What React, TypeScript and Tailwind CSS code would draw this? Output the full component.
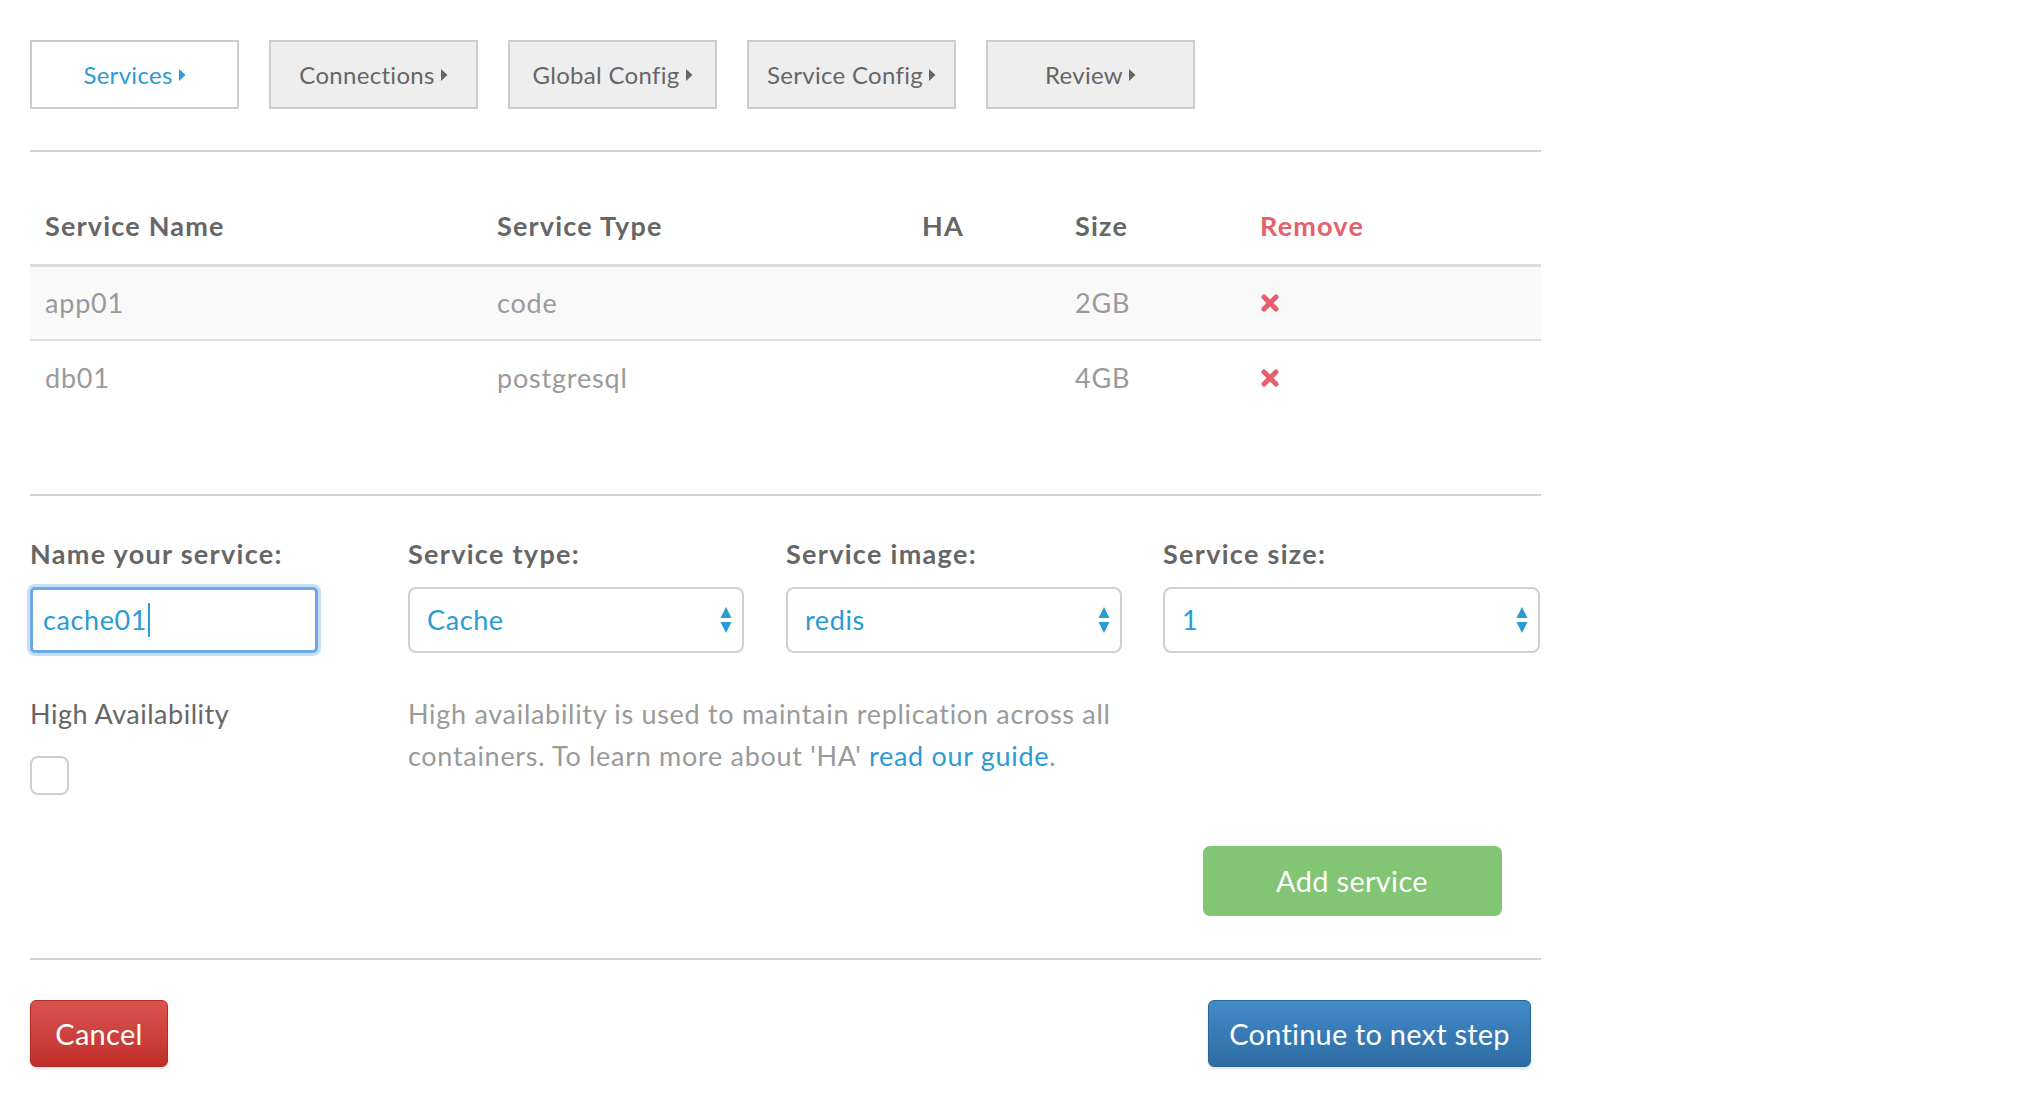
const steps = ["Services", "Connections", "Global Config", "Service Config", "Review"];

const services = [
  { name: "app01", type: "code", ha: "", size: "2GB" },
  { name: "db01", type: "postgresql", ha: "", size: "4GB" },
];

function Caret() {
  return (
    <svg width="8" height="14" viewBox="0 0 8 14" className="ml-[5px] inline-block">
      <path d="M1 1 L7.5 7 L1 13 Z" fill="currentColor" />
    </svg>
  );
}

function RemoveIcon() {
  return (
    <svg width="20" height="20" viewBox="0 0 20 20" className="text-[#e4606d]">
      <path d="M4 4 L16 16 M16 4 L4 16" stroke="currentColor" strokeWidth="5" strokeLinecap="round" />
    </svg>
  );
}

function SelectArrows() {
  return (
    <svg width="12" height="28" viewBox="0 0 12 28" className="text-[#2b9bd3]">
      <path d="M6 1 L11.5 12 L0.5 12 Z" fill="currentColor" />
      <path d="M0.5 16 L11.5 16 L6 27 Z" fill="currentColor" />
    </svg>
  );
}

function FakeSelect({ value, width }: { value: string; width: string }) {
  return (
    <div
      className={`${width} h-[66px] flex items-center justify-between rounded-[8px] border-2 border-[#cfcfcf] bg-white pl-[17px] pr-[10px] text-[27px] tracking-[0.6px] text-[#2b9bd3]`}
    >
      <span>{value}</span>
      <SelectArrows />
    </div>
  );
}

const cols = "grid grid-cols-[452px_425px_153px_185px_1fr] items-center";

export default function App() {
  return (
    <div className="min-h-screen bg-white font-['Lato','Open_Sans',sans-serif]">
      <div className="ml-[30px] w-[1511px] pt-[40px]">
        {/* Steps */}
        <div className="flex gap-[30px]">
          {steps.map((s, i) => (
            <div
              key={s}
              className={`w-[209px] h-[69px] flex items-center justify-center border-2 border-[#cccccc] text-[24px] tracking-[0.3px] ${
                i === 0 ? "bg-white text-[#2b9bd3]" : "bg-[#eeeeee] text-[#666666]"
              }`}
            >
              {s}
              <Caret />
            </div>
          ))}
        </div>

        <div className="mt-[41px] h-[2px] bg-[#d2d2d2]" />

        {/* Table */}
        <div className="mt-[37px]">
          <div className={`${cols} h-[78px] border-b-[3px] border-[#dddddd] text-[27px] tracking-[1.2px] font-bold text-[#666666]`}>
            <div className="px-[15px]">Service Name</div>
            <div className="px-[15px]">Service Type</div>
            <div className="px-[15px]">HA</div>
            <div className="px-[15px]">Size</div>
            <div className="px-[15px] text-[#e4606d]">Remove</div>
          </div>
          {services.map((r, i) => (
            <div
              key={r.name}
              className={`${cols} h-[74px] text-[27px] tracking-[0.8px] text-[#9a9a9a] ${
                i === 0 ? "bg-[#f9f9f9] border-b-2 border-[#dddddd]" : ""
              }`}
            >
              <div className="px-[15px]">{r.name}</div>
              <div className="px-[15px]">{r.type}</div>
              <div className="px-[15px]">{r.ha}</div>
              <div className="px-[15px]">{r.size}</div>
              <div className="px-[15px] flex">
                <RemoveIcon />
              </div>
            </div>
          ))}
        </div>

        <div className="mt-[79px] h-[2px] bg-[#d2d2d2]" />

        {/* Form */}
        <div className="mt-[40px] grid grid-cols-[378px_378px_377px_1fr]">
          <div>
            <div className="h-[36px] flex items-center text-[27px] tracking-[1.3px] font-bold text-[#666666]">Name your service:</div>
            <div className="mt-[15px] w-[288px] h-[66px] flex items-center rounded-[5px] border-[3px] border-[#6aa8ea] bg-white pl-[10px] text-[27px] tracking-[0.6px] text-[#2b9bd3] shadow-[0_0_0_3px_#c7def7]">
              cache01
              <span className="ml-[1px] w-[2px] h-[34px] bg-[#2b9bd3]" />
            </div>
          </div>
          <div>
            <div className="h-[36px] flex items-center text-[27px] tracking-[1.3px] font-bold text-[#666666]">Service type:</div>
            <div className="mt-[15px]">
              <FakeSelect value="Cache" width="w-[336px]" />
            </div>
          </div>
          <div>
            <div className="h-[36px] flex items-center text-[27px] tracking-[1.3px] font-bold text-[#666666]">Service image:</div>
            <div className="mt-[15px]">
              <FakeSelect value="redis" width="w-[336px]" />
            </div>
          </div>
          <div>
            <div className="h-[36px] flex items-center text-[27px] tracking-[1.3px] font-bold text-[#666666]">Service size:</div>
            <div className="mt-[15px]">
              <FakeSelect value="1" width="w-[377px]" />
            </div>
          </div>
        </div>

        <div className="mt-[40px] grid grid-cols-[378px_755px_1fr]">
          <div>
            <div className="h-[42px] flex items-center text-[27px] tracking-[0.5px] text-[#666666]">High Availability</div>
            <div className="mt-[21px] w-[39px] h-[39px] rounded-[8px] border-2 border-[#cfcfcf] bg-white" />
          </div>
          <p className="w-[740px] text-[27px] leading-[42px] tracking-[0.7px] text-[#9a9a9a]">
            High availability is used to maintain replication across all containers. To learn more about 'HA'{" "}
            <a className="text-[#2b9bd3]">read our guide</a>.
          </p>
          <div />
        </div>

        <div className="mt-[51px] grid grid-cols-[1133px_1fr]">
          <div />
          <div className="flex justify-center">
            <button className="w-[299px] h-[70px] rounded-[7px] bg-[#82c574] text-[29px] tracking-[0.3px] text-white">
              Add service
            </button>
          </div>
        </div>

        <div className="mt-[42px] h-[2px] bg-[#d2d2d2]" />

        <div className="mt-[40px] flex justify-between pr-[10px]">
          <button className="w-[138px] h-[67px] rounded-[6px] border border-[#b52b27] bg-gradient-to-b from-[#d9534f] to-[#c12e2a] text-[29px] tracking-[0.3px] text-white shadow-[0_2px_3px_rgba(0,0,0,0.12)]">
            Cancel
          </button>
          <button className="w-[323px] h-[67px] rounded-[6px] border border-[#2b669a] bg-gradient-to-b from-[#428bca] to-[#2d6ca2] text-[29px] tracking-[0.2px] text-white shadow-[0_2px_3px_rgba(0,0,0,0.12)]">
            Continue to next step
          </button>
        </div>
      </div>
    </div>
  );
}
